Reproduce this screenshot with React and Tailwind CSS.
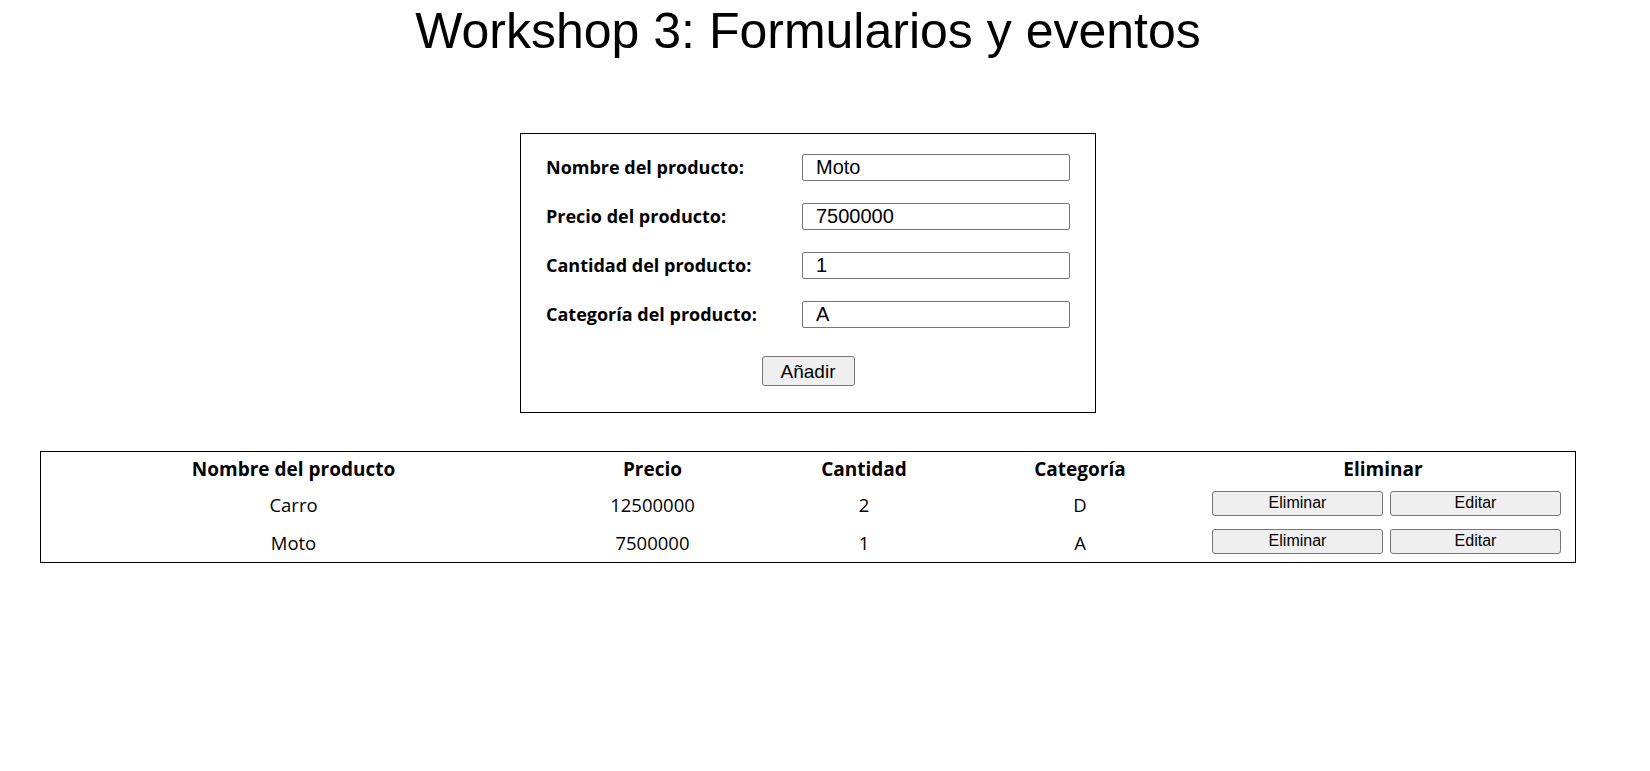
import React from "react";

const rows = [
  { nombre: "Carro", precio: "12500000", cantidad: "2", categoria: "D" },
  { nombre: "Moto", precio: "7500000", cantidad: "1", categoria: "A" },
];

const fields = [
  { label: "Nombre del producto:", value: "Moto" },
  { label: "Precio del producto:", value: "7500000" },
  { label: "Cantidad del producto:", value: "1" },
  { label: "Categoría del producto:", value: "A" },
];

export default function App() {
  return (
    <div className="min-h-[771px] w-full bg-white text-black">
      <div className="w-[1616px] font-['Open_Sans',sans-serif]">
        <h1 className="pt-[3px] text-center text-[50px] leading-[57px] font-normal font-['Liberation_Sans',Arial,sans-serif]">
          Workshop 3: Formularios y eventos
        </h1>

        <form className="mx-auto mt-[73px] w-[576px] border border-black px-[25px] pt-[20px] pb-[26px]">
          <div className="grid grid-cols-[256px_268px] items-center gap-y-[22px]">
            {fields.map((f) => (
              <React.Fragment key={f.label}>
                <label className="text-[18px] font-bold leading-[27px]">{f.label}</label>
                <input
                  defaultValue={f.value}
                  className="h-[27px] w-[268px] rounded-[2px] border border-[#767676] bg-white pl-[13px] text-[20px] leading-none text-black font-['Liberation_Sans',Arial,sans-serif] outline-none"
                />
              </React.Fragment>
            ))}
          </div>
          <button
            type="button"
            className="mx-auto mt-[28px] block h-[30px] w-[93px] rounded-[3px] border border-[#767676] bg-[#efefef] text-[19px] leading-none text-black font-['Liberation_Sans',Arial,sans-serif]"
          >
            Añadir
          </button>
        </form>

        <div className="mx-[40px] mt-[38px] border border-black">
          <table className="w-full table-fixed border-collapse">
            <colgroup>
              <col className="w-[505px]" />
              <col className="w-[213px]" />
              <col className="w-[210px]" />
              <col className="w-[222px]" />
              <col />
            </colgroup>
            <thead>
              <tr className="h-[34px] text-[19px] font-bold">
                <th className="p-0 text-center">Nombre del producto</th>
                <th className="p-0 text-center">Precio</th>
                <th className="p-0 text-center">Cantidad</th>
                <th className="p-0 text-center">Categoría</th>
                <th className="p-0 text-center">Eliminar</th>
              </tr>
            </thead>
            <tbody>
              {rows.map((r) => (
                <tr key={r.nombre} className="h-[38px] text-[18.5px]">
                  <td className="p-0 text-center">{r.nombre}</td>
                  <td className="p-0 text-center">{r.precio}</td>
                  <td className="p-0 text-center">{r.cantidad}</td>
                  <td className="p-0 text-center">{r.categoria}</td>
                  <td className="p-0">
                    <div className="flex justify-center gap-[7px] pb-[4px] pl-[7px]">
                      <button
                        type="button"
                        className="h-[25px] w-[171px] rounded-[3px] border border-[#767676] bg-[#efefef] text-[16px] leading-none text-black font-['Liberation_Sans',Arial,sans-serif]"
                      >
                        Eliminar
                      </button>
                      <button
                        type="button"
                        className="h-[25px] w-[171px] rounded-[3px] border border-[#767676] bg-[#efefef] text-[16px] leading-none text-black font-['Liberation_Sans',Arial,sans-serif]"
                      >
                        Editar
                      </button>
                    </div>
                  </td>
                </tr>
              ))}
            </tbody>
          </table>
        </div>
      </div>
    </div>
  );
}
